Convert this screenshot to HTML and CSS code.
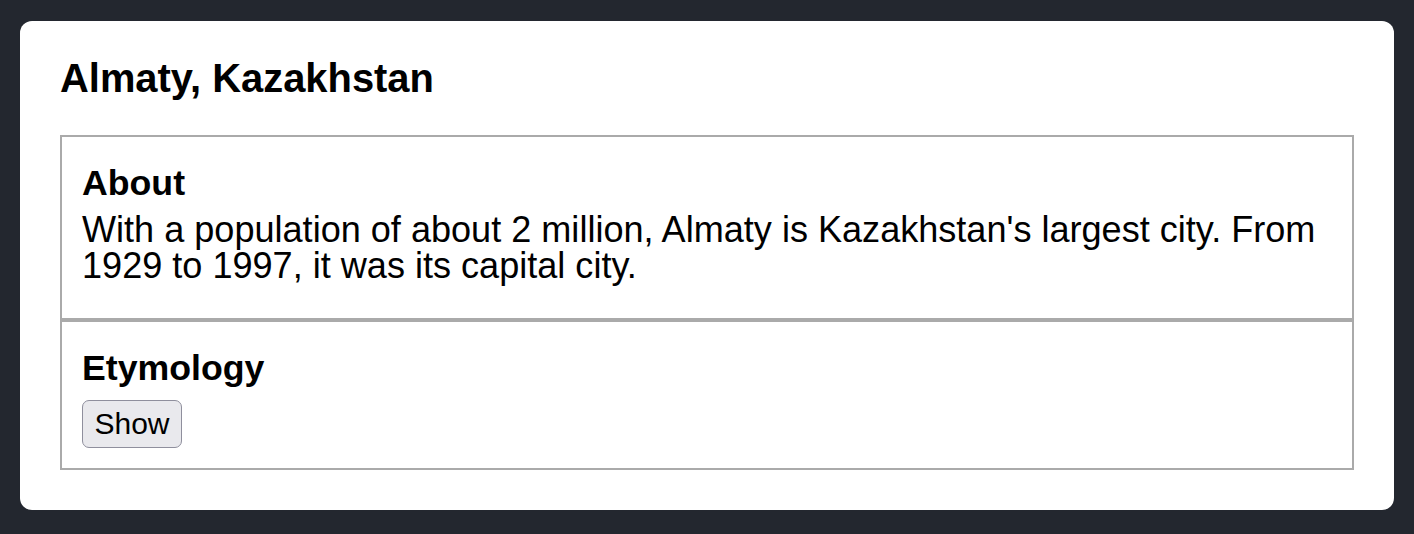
FILE: index.html
```html
<!DOCTYPE html>
<html lang="en">
<head>
<meta charset="utf-8">
<title>Almaty, Kazakhstan</title>
<link rel="stylesheet" href="styles.css">
</head>
<body>
  <main class="card">
    <h1 class="title">Almaty, Kazakhstan</h1>
    <section class="panel">
      <h2 class="panel-title">About</h2>
      <p class="panel-text">With a population of about 2 million, Almaty is Kazakhstan's largest city. From 1929 to 1997, it was its capital city.</p>
    </section>
    <section class="panel">
      <h2 class="panel-title">Etymology</h2>
      <button class="show-btn" type="button">Show</button>
    </section>
  </main>
</body>
</html>
```
FILE: styles.css
```css
* {
  box-sizing: border-box;
}

html,
body {
  background: #23272f;
}

body {
  margin: 21px 20px;
  font-family: "Liberation Sans", Arial, Helvetica, sans-serif;
  color: #000;
}

.card {
  background: #fff;
  border-radius: 12px;
  padding: 34px 40px 40px;
}

.title {
  margin: 0 0 34px;
  font-size: 39.9px;
  line-height: 46px;
  font-weight: 700;
}

.panel {
  border: 2px solid #aaa;
  padding: 25px 20px 20px;
}

.panel-title {
  margin: 0 0 8px;
  font-size: 35.7px;
  line-height: 42px;
  font-weight: 700;
}

.panel-text {
  margin: 0 0 14px;
  font-size: 36.1px;
  line-height: 36px;
}

.show-btn {
  display: block;
  margin-top: 11px;
  width: 100px;
  height: 48px;
  padding: 0;
  font-family: "Liberation Sans", Arial, Helvetica, sans-serif;
  font-size: 30px;
  line-height: 44px;
  color: #000;
  background: #e9e9ed;
  border: 1.5px solid #8f8f9d;
  border-radius: 7px;
}
```
